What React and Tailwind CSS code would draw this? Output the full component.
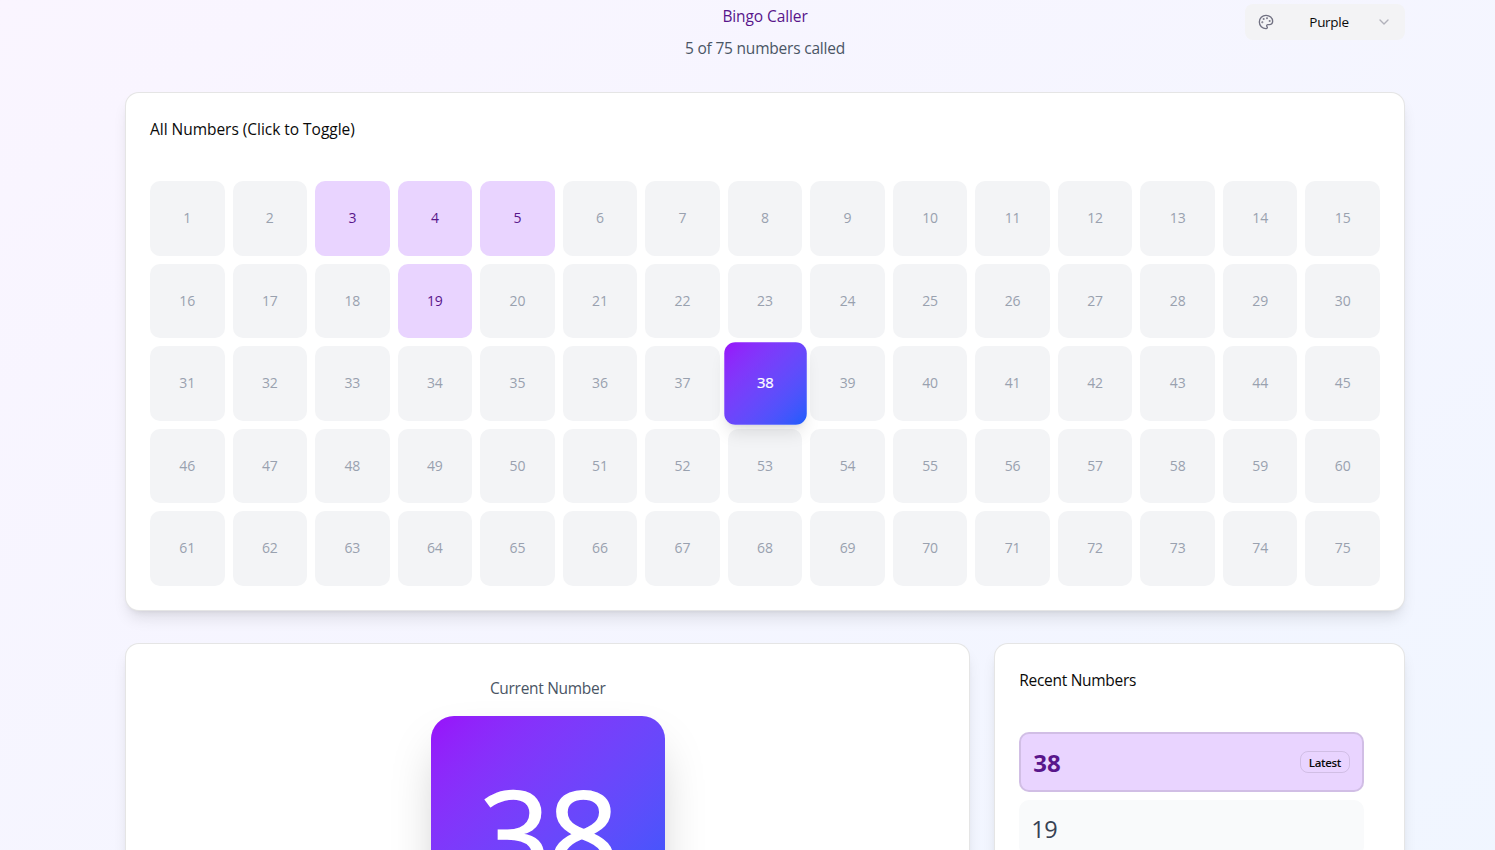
import { Palette, ChevronDown } from "lucide-react";

const called = [3, 4, 5, 19];
const current = 38;
const numbers = Array.from({ length: 75 }, (_, i) => i + 1);

function cellClass(n) {
  const base = "flex aspect-square items-center justify-center rounded-[10px] leading-5 tracking-[-0.1px]";
  if (n === current)
    return base + " z-10 scale-110 bg-gradient-to-br from-[#9810fa] to-[#155dfc] text-[13.5px] text-white shadow-lg [-webkit-text-stroke:0.2px_white]";
  if (called.includes(n)) return base + " bg-[#e9d4ff] text-[14px] text-[#59168b]";
  return base + " bg-[#f3f4f6] text-[14px] text-[#99a1af]";
}

function Card({ className, children }) {
  return (
    <section className={"rounded-[14px] border border-black/10 bg-white shadow-lg " + className}>
      {children}
    </section>
  );
}

export default function App() {
  return (
    <div className="h-[850px] w-[1495px] overflow-hidden font-['Open_Sans','Noto_Sans',sans-serif] text-[#0a0a0a]">
      <div className="flex h-[1100px] w-[1530px] flex-col items-center bg-gradient-to-br from-[#faf5ff] to-[#eff6ff]">
        <div className="flex w-[1280px] flex-col">
          <header className="grid h-[92px] grid-cols-[160px_1fr_160px] items-start pt-1">
            <div />
            <div className="flex flex-col items-center gap-2">
              <h1 className="text-[15.5px] leading-6 tracking-[-0.1px] text-[#59168b]">Bingo Caller</h1>
              <p className="text-[15.5px] leading-6 tracking-[-0.2px] text-[#4a5565]">5 of 75 numbers called</p>
            </div>
            <button className="flex h-9 w-40 items-center justify-between rounded-lg bg-[#f3f3f5] px-[13px] text-[13.5px] leading-5">
              <Palette className="size-4 text-[#717182]" />
              <span className="translate-x-[4px] tracking-[-0.3px]">Purple</span>
              <ChevronDown className="size-4 text-[#717182] opacity-50" />
            </button>
          </header>

          <Card className="flex flex-col px-6 pb-6">
            <h2 className="h-[88px] pt-6 text-[15.5px] leading-6 tracking-[-0.03px]">All Numbers (Click to Toggle)</h2>
            <div className="grid grid-cols-[repeat(15,minmax(0,1fr))] gap-2">
              {numbers.map((n) => (
                <button key={n} className={cellClass(n)}>
                  {n}
                </button>
              ))}
            </div>
          </Card>

          <div className="mt-8 grid grid-cols-3 gap-6">
            <Card className="col-span-2 flex h-[420px] flex-col items-center pt-8">
              <h3 className="text-[15.5px] leading-6 tracking-[-0.3px] text-[#4a5565]">Current Number</h3>
              <div className="mt-4 flex size-[234px] items-center justify-center rounded-[23px] bg-gradient-to-br from-[#9810fa] to-[#155dfc] text-[125px] leading-none tracking-[-3px] text-white shadow-2xl [-webkit-text-stroke:1.5px_white]">
                38
              </div>
            </Card>
            <Card className="flex h-[420px] flex-col px-6">
              <h3 className="h-[88px] pt-6 text-[15.5px] leading-6 tracking-[-0.3px]">Recent Numbers</h3>
              <div className="flex flex-col gap-2 pr-4">
                <div className="flex h-[60px] items-center justify-between rounded-[10px] border-2 border-black/10 bg-[#e9d4ff] px-3">
                  <span className="pt-0.5 text-2xl font-bold text-[#59168b]">38</span>
                  <span className="flex h-[22px] items-center rounded-lg border border-black/10 px-2 pt-px text-[11.5px] font-semibold tracking-[-0.35px]">
                    Latest
                  </span>
                </div>
                <div className="flex h-[56px] items-center rounded-[10px] bg-[#f9fafb] px-3">
                  <span className="pt-0.5 text-[23.5px] leading-8 tracking-[-0.5px] text-[#364153]">19</span>
                </div>
              </div>
            </Card>
          </div>
        </div>
      </div>
    </div>
  );
}
